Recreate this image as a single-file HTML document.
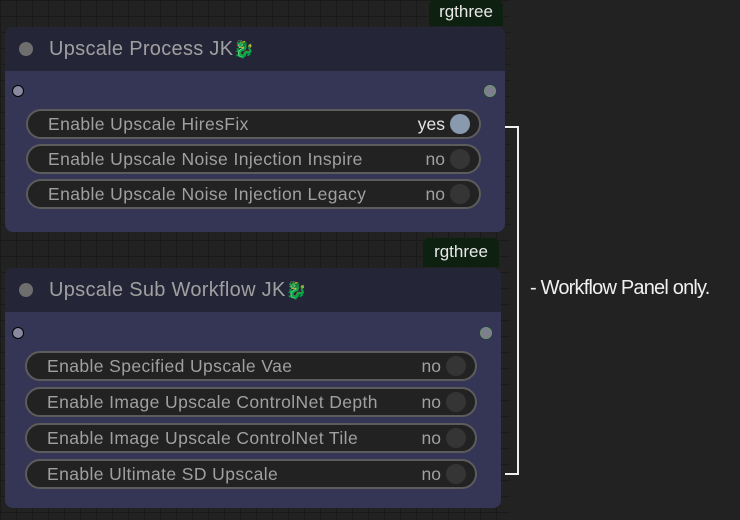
<!DOCTYPE html>
<html><head><style>
*{margin:0;padding:0;box-sizing:border-box}
body{width:740px;height:520px;overflow:hidden;background:#222;position:relative;font-family:"Liberation Sans",sans-serif}
.grid{position:absolute;left:0;top:0;width:510px;height:520px;background-color:#222;background-image:linear-gradient(#1a1a1a 1px,transparent 1px),linear-gradient(90deg,#1a1a1a 1px,transparent 1px);background-size:16px 16px}
.node{position:absolute;border-radius:8px;background:#353556;overflow:hidden}
.title{height:44px;background:#252538;position:relative;color:#a0a0a0;font-size:20px;letter-spacing:0.3px;line-height:44px;padding-left:44px}
.tdot{position:absolute;left:14px;top:15px;width:14px;height:14px;border-radius:50%;background:#6e6e6e}
.badge{position:absolute;background:#0e200f;color:#e8e8e8;font-size:17px;text-align:center;border-radius:6px 6px 0 0;line-height:24px}
.w{position:absolute;height:30px;border:2px solid #5c5c5c;border-radius:15px;background:#222;color:#a0a0a0;font-size:17.5px;letter-spacing:0.4px;line-height:26px;padding-left:20px;white-space:nowrap}
.w .v{position:absolute;right:34px;top:0;letter-spacing:0}
.w .c{position:absolute;right:9px;top:3px;width:20px;height:20px;border-radius:50%;background:#353535}
.w.on .c{background:#8a9aae}
.w.on .v{color:#e4e4e4}
.in{position:absolute;width:12px;height:12px;border-radius:50%;background:#8888a0;border:1.5px solid #000}
.out{position:absolute;width:12px;height:12px;border-radius:50%;background:#7e7e90;border:1px solid #6a9a6a}
.emo{font-size:17px}
</style></head><body>
<div class="grid"></div>
<div class="badge" style="left:429px;top:0;width:74px;height:26px">rgthree</div>
<div class="node" style="left:5px;top:27px;width:500px;height:205px">
 <div class="title"><div class="tdot"></div>Upscale Process JK<span class="emo">🐉</span></div>
 <div class="in" style="left:7px;top:58px"></div>
 <div class="out" style="left:479px;top:58px"></div>
 <div class="w on" style="left:21px;top:82px;width:455px">Enable Upscale HiresFix<span class="v">yes</span><span class="c"></span></div>
 <div class="w" style="left:21px;top:117px;width:455px">Enable Upscale Noise Injection Inspire<span class="v">no</span><span class="c"></span></div>
 <div class="w" style="left:21px;top:152px;width:455px">Enable Upscale Noise Injection Legacy<span class="v">no</span><span class="c"></span></div>
</div>
<div class="badge" style="left:423px;top:238px;width:76px;height:29px;line-height:28px">rgthree</div>
<div class="node" style="left:5px;top:268px;width:496px;height:240px">
 <div class="title"><div class="tdot"></div>Upscale Sub Workflow JK<span class="emo">🐉</span></div>
 <div class="in" style="left:7px;top:59px"></div>
 <div class="out" style="left:475px;top:59px"></div>
 <div class="w" style="left:20px;top:83px;width:452px">Enable Specified Upscale Vae<span class="v">no</span><span class="c"></span></div>
 <div class="w" style="left:20px;top:119px;width:452px">Enable Image Upscale ControlNet Depth<span class="v">no</span><span class="c"></span></div>
 <div class="w" style="left:20px;top:155px;width:452px">Enable Image Upscale ControlNet Tile<span class="v">no</span><span class="c"></span></div>
 <div class="w" style="left:20px;top:191px;width:452px">Enable Ultimate SD Upscale<span class="v">no</span><span class="c"></span></div>
</div>
<div style="position:absolute;left:505px;top:126px;width:14px;height:349px;border:2px solid #eee;border-left:none"></div>
<div style="position:absolute;left:530px;top:277px;color:#f0f0f0;font-size:20px;letter-spacing:-0.8px;white-space:nowrap">- Workflow Panel only.</div>
</body></html>
